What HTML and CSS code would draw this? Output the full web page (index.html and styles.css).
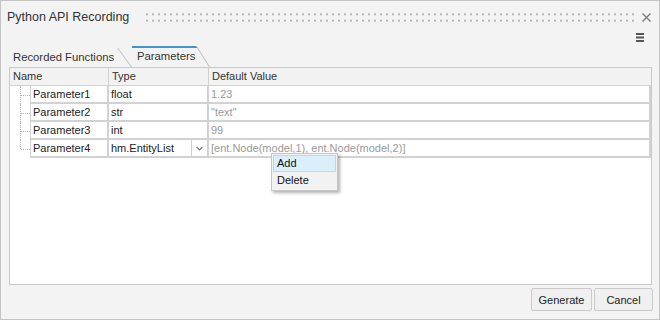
FILE: index.html
```html
<!DOCTYPE html>
<html lang="en">
<head>
    <meta charset="UTF-8">
    <title>Python API Recording</title>
    <link rel="stylesheet" href="styles.css">
</head>
<body>
    <div class="window">
        <div class="titlebar">
            <span class="title">Python API Recording</span>
            <div class="grip"></div>
            <svg class="close" width="9" height="9" viewBox="0 0 9 9">
                <path d="M0.5 0.5 L8.5 8.5 M8.5 0.5 L0.5 8.5" stroke="#7a7a7a" stroke-width="1.3" fill="none"/>
            </svg>
        </div>

        <div class="toolbar">
            <svg class="menu-icon" width="8" height="9" viewBox="0 0 8 9">
                <rect x="0" y="0" width="8" height="2" fill="#555"/>
                <rect x="0" y="3.5" width="8" height="2" fill="#555"/>
                <rect x="0" y="7" width="8" height="2" fill="#555"/>
            </svg>
        </div>

        <div class="tabs">
            <div class="tab">Recorded Functions</div>
            <div class="tab active">Parameters</div>
        </div>

        <div class="panel">
            <div class="grid">
                <div class="head">Name</div>
                <div class="head">Type</div>
                <div class="head last">Default Value</div>

                <div class="name-cell"><span class="tree"></span><span class="box">Parameter1</span></div>
                <div class="cell">float</div>
                <div class="cell value">1.23</div>

                <div class="name-cell"><span class="tree"></span><span class="box">Parameter2</span></div>
                <div class="cell">str</div>
                <div class="cell value">"text"</div>

                <div class="name-cell"><span class="tree"></span><span class="box">Parameter3</span></div>
                <div class="cell">int</div>
                <div class="cell value">99</div>

                <div class="name-cell"><span class="tree end"></span><span class="box">Parameter4</span></div>
                <div class="cell combo">
                    <span class="combo-text">hm.EntityList</span>
                    <span class="chev">
                        <svg width="7" height="5" viewBox="0 0 7 5"><path d="M0.5 1 L3.5 4 L6.5 1" stroke="#777" stroke-width="1.1" fill="none"/></svg>
                    </span>
                </div>
                <div class="cell value">[ent.Node(model,1), ent.Node(model,2)]</div>
            </div>

            <div class="context-menu">
                <div class="menu-item hover">Add</div>
                <div class="menu-item">Delete</div>
            </div>
        </div>

        <div class="footer">
            <button class="btn">Generate</button>
            <button class="btn">Cancel</button>
        </div>
    </div>
</body>
</html>
```

FILE: styles.css
```css
body {
    margin: 0;
    font-family: "Liberation Sans", Arial, sans-serif;
    font-size: 11px;
    color: #222;
}
.window {
    width: 660px;
    height: 320px;
    box-sizing: border-box;
    border: 1px solid #c4c4c4;
    background-color: #f3f3f3;
    display: flex;
    flex-direction: column;
}
.titlebar {
    height: 31px;
    display: flex;
    align-items: center;
    padding: 0 8px 0 6px;
}
.title {
    font-size: 12.5px;
    color: #333;
    padding-top: 1px;
}
.grip {
    flex: 1;
    height: 13px;
    margin: 1px 7px 0 15px;
    background-image: radial-gradient(circle, #a9a9a9 0.8px, transparent 1.2px);
    background-size: 6px 6.5px;
}
.close {
    margin-top: 1px;
}
.toolbar {
    height: 14px;
    display: flex;
    justify-content: flex-end;
    padding-right: 15px;
}
.menu-icon {
    margin-top: 1px;
}
.tabs {
    height: 21px;
    display: flex;
    align-items: flex-end;
    padding-left: 7px;
}
.tab {
    position: relative;
    height: 19px;
    line-height: 19px;
    padding: 0 5px;
    width: 100px;
    font-size: 11.3px;
    white-space: nowrap;
    color: #333;
}
.tab::after {
    content: '';
    position: absolute;
    top: 0;
    bottom: 0;
    right: -14px;
    border-right: 1px solid #bcbcbc;
    transform: skewX(36deg);
    transform-origin: bottom;
}
.tab.active {
    height: 19px;
    width: 55px;
    margin-left: 14px;
    border-top: 2px solid #3d97c8;
    line-height: 17px;
}
.tab.active::after {
    top: -2px;
    right: -13px;
    transform: skewX(32deg);
}
.panel {
    position: relative;
    height: 218px;
    margin: 0 7px 0 8px;
    box-sizing: border-box;
    border: 1px solid #c9c9c9;
    background-color: #fff;
}
.grid {
    display: grid;
    grid-template-columns: 99px 100px 1fr;
}
.head {
    height: 17px;
    line-height: 17px;
    padding-left: 3px;
    background-color: #f2f2f2;
    border-right: 1px solid #d2d2d2;
    border-bottom: 1px solid #d2d2d2;
    color: #333;
}
.head.last {
    border-right: none;
}
.name-cell {
    display: flex;
    height: 18px;
}
.tree {
    position: relative;
    width: 20px;
    flex: none;
}
.tree::before {
    content: '';
    position: absolute;
    left: 10px;
    top: 0;
    bottom: 0;
    border-left: 1px dotted #b4b4b4;
}
.tree.end::before {
    bottom: 9px;
}
.tree::after {
    content: '';
    position: absolute;
    left: 11px;
    top: 9px;
    width: 9px;
    border-top: 1px dotted #b4b4b4;
}
.box, .cell {
    height: 16px;
    line-height: 17px;
    border-bottom: 2px solid #d2d2d2;
    border-right: 2px solid #d2d2d2;
    white-space: nowrap;
    overflow: hidden;
}
.box {
    flex: 1;
    padding-left: 2px;
    border-left: 1px solid #d2d2d2;
}
.cell {
    padding-left: 2px;
}
.value {
    color: #9a9a9a;
}
.combo {
    display: flex;
}
.combo-text {
    flex: 1;
}
.chev {
    width: 15px;
    border-left: 1px solid #d2d2d2;
    display: flex;
    align-items: center;
    justify-content: center;
}
.context-menu {
    position: absolute;
    left: 261px;
    top: 85px;
    width: 63px;
    padding: 1px;
    background-color: #f2f2f2;
    border: 1px solid #c6c6c6;
    box-shadow: 2px 2px 3px rgba(0, 0, 0, 0.3);
}
.menu-item {
    height: 15px;
    line-height: 15px;
    padding-left: 3px;
    border: 1px solid transparent;
    color: #111;
}
.menu-item.hover {
    background-color: #dbeffa;
    border-color: #b4dcf2;
}
.footer {
    flex: 1;
    display: flex;
    justify-content: flex-end;
    align-items: flex-start;
    gap: 2px;
    padding: 3px 6px 0 0;
}
.btn {
    height: 23px;
    padding: 0;
    font-family: "Liberation Sans", Arial, sans-serif;
    font-size: 11px;
    color: #222;
    background-color: #f0f0f0;
    border: 1px solid #cbcbcb;
    border-radius: 2px;
}
.btn:first-child {
    width: 61px;
}
.btn:last-child {
    width: 59px;
}
```
